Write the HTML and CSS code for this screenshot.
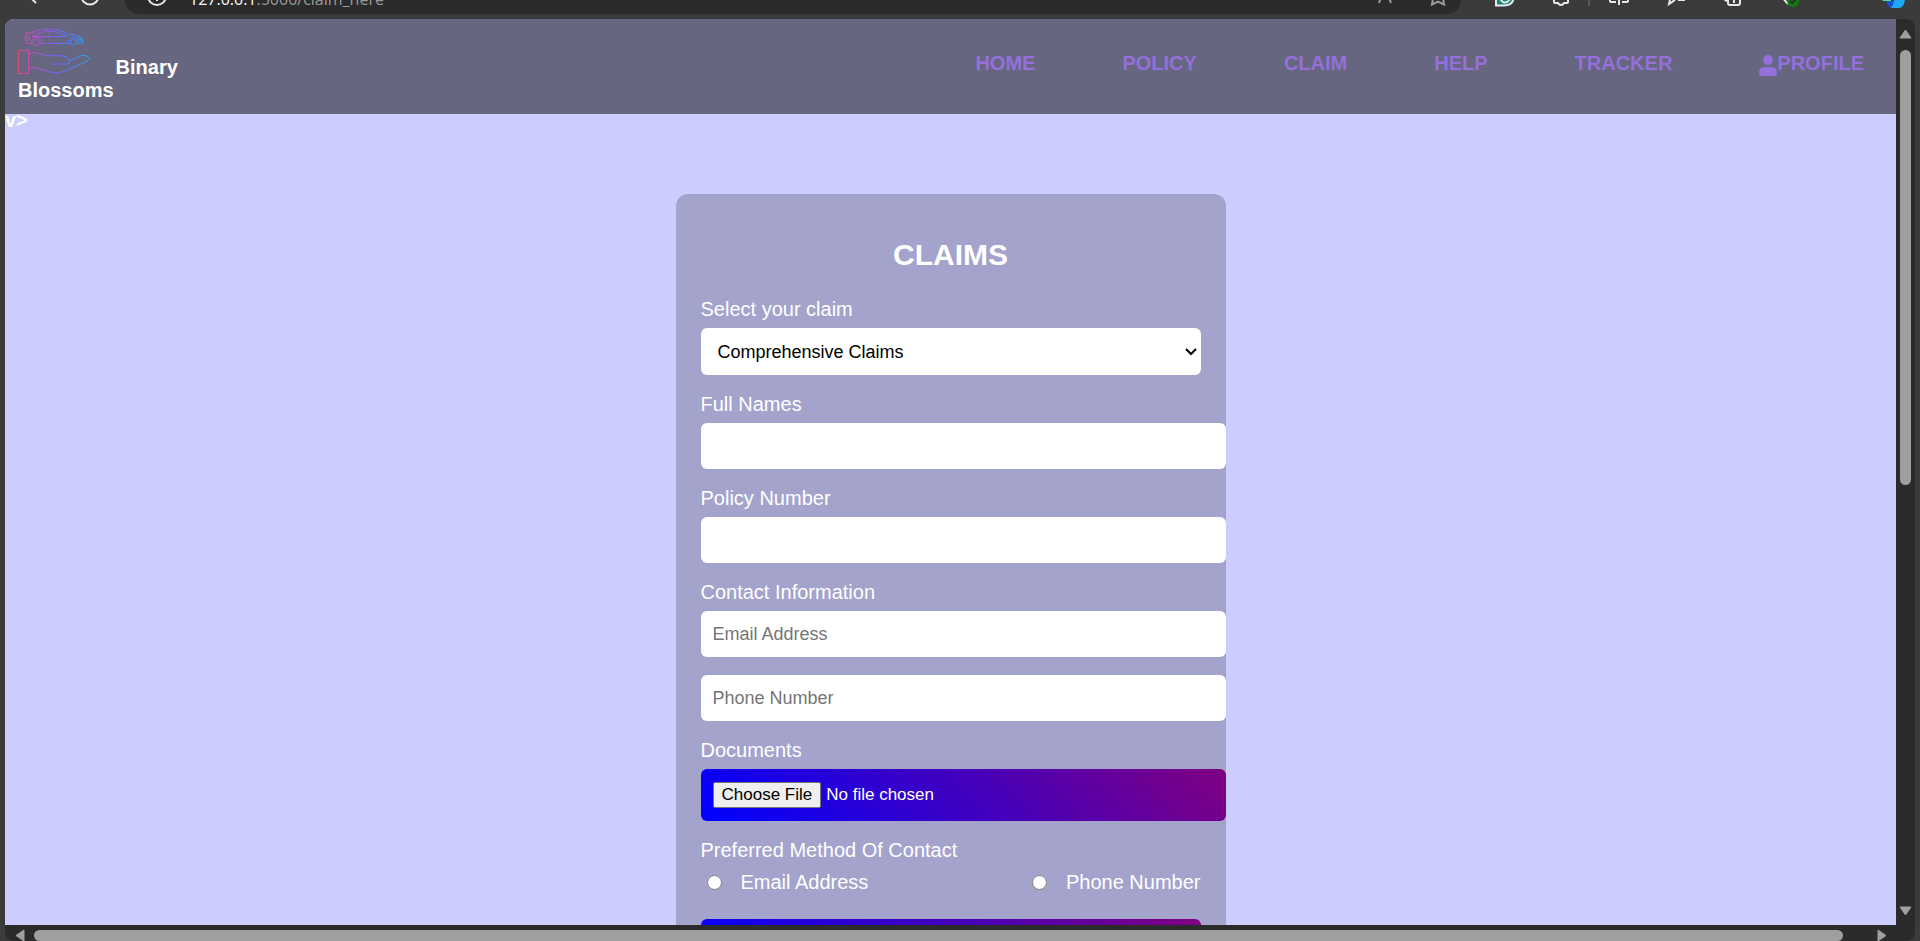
FILE: index.html
```html
<!DOCTYPE html>
<html lang="en">
<head>
<meta charset="utf-8">
<title>Binary Blossoms - Claims</title>
<link rel="stylesheet" href="styles.css">
</head>
<body>
<div class="toolbar">
  <div class="tools-left">
    <svg class="tool" viewBox="0 0 20 12"><path d="M4 -5 L12 3"/></svg>
    <svg class="tool" viewBox="0 0 20 12"><circle cx="10" cy="-4" r="8.5"/></svg>
  </div>
  <div class="address">
    <svg class="tool info" viewBox="0 0 20 12"><circle cx="10" cy="-4" r="9"/><path d="M10 -4V1"/></svg>
    <span class="url"><b>127.0.0.1</b>:5000/claim_here</span>
    <svg class="tool dim" viewBox="0 0 20 12"><path d="M4 3 L8 -8 M16 3 L12 -8 M6 -2H14"/></svg>
    <svg class="tool dim star" viewBox="0 0 20 12"><path d="M5 -2 L4 4.500 L10 1.500 L16 4.500 L15 -2"/></svg>
  </div>
  <div class="tools-right">
    <div class="cell"><svg class="tool" viewBox="0 0 20 12"><path class="teal" d="M1 -10H19V-3Q18 5.500 9 5.500H1Z"/><path d="M5 -1Q10 6 15 -1"/></svg></div>
    <div class="cell ruled"><svg class="tool" viewBox="0 0 20 12"><path d="M3 -4V2Q3 3 4 3H7Q8 5 10 5T13 3H16Q17 3 17 2V-4"/></svg></div>
    <div class="cell"><svg class="tool" viewBox="0 0 20 12"><path d="M1 -6V1Q1 2 3 2H7M19 -6V1Q19 2 17 2H13M10 -8V5"/></svg></div>
    <div class="cell"><svg class="tool" viewBox="0 0 20 12"><path d="M5 -5 L3 4 L9 0 M12 0H19"/></svg></div>
    <div class="cell"><svg class="tool" viewBox="0 0 20 12"><path d="M5 -6V3Q5 5 7 5H15Q17 5 17 3V-6M11 -4V3M1 -3Q1 1 5 1"/></svg></div>
    <div class="cell"><svg class="tool" viewBox="0 0 20 12"><path d="M1 -4 L8 4"/><circle class="green" cx="13" cy="1" r="6"/><path class="tick" d="M10 1 L12 3 L16 -1"/></svg></div>
    <svg class="copilot" viewBox="0 0 26 12"><path fill="#4fe08c" d="M0 -4H11V1H3Z"/><path fill="#1b4fd8" d="M6 1H15L12 8Q8 8 6 1Z"/><path fill="#1ea7f2" d="M14 -4H26L24 4Q22 8 19 8H11Q13 6 14 1Z"/></svg>
  </div>
</div>

<div class="window">
  <div class="viewport">
    <header class="header">
      <a class="brand" href="#">
        <svg class="logo" viewBox="54 76 276 144" aria-hidden="true">
          <defs><linearGradient id="neon" gradientUnits="userSpaceOnUse" x1="54" y1="0" x2="270" y2="0">
            <stop offset="0" stop-color="#f0457a"/><stop offset=".22" stop-color="#c34bcc"/><stop offset=".5" stop-color="#805cff"/><stop offset=".75" stop-color="#4f80ff"/><stop offset="1" stop-color="#22aaea"/>
          </linearGradient></defs>
          <g fill="none" stroke="url(#neon)" stroke-width="3" stroke-linejoin="round">
            <path d="M98 128H80Q75 122 76 113L80 97H92Q115 85 148 85Q180 86 205 101Q228 102 240 107Q249 112 248 126L244 128H231M209 128H120"/>
            <path d="M96 108Q118 92 150 92Q180 93 202 108ZM149 92V108M78 110H88V118H77M232 110L246 116M234 118H247"/>
            <circle cx="109" cy="125" r="9"/><path d="M94 125A15 15 0 0 1 124 125"/>
            <circle cx="220" cy="125" r="9"/><path d="M205 125A15 15 0 0 1 235 125"/>
            <path d="M56 149H86V219H56Z"/>
            <path d="M86 158Q102 153 112 157Q128 163 140 165H178Q205 166 208 180L206 190H154M208 181Q230 172 240 166Q260 160 269 174Q266 180 250 187L200 209Q178 220 158 216L105 202Q96 199 86 202"/>
          </g>
        </svg> Binary Blossoms
      </a>
      <nav class="nav">
        <a href="#">HOME</a>
        <a href="#">POLICY</a>
        <a href="#">CLAIM</a>
        <a href="#">HELP</a>
        <a href="#">TRACKER</a>
        <a href="#"><svg class="user" viewBox="0 0 18 21" aria-hidden="true"><circle cx="9" cy="5" r="5"/><path d="M5 12H13Q18 12 18 18V19Q18 21 16 21H2Q0 21 0 19V18Q0 12 5 12Z"/></svg>PROFILE</a>
      </nav>
    </header>
    <div class="stray">v&gt;</div>

    <form class="card">
      <h1>CLAIMS</h1>
      <div class="field">
        <label for="claim">Select your claim</label>
        <div class="select-wrap">
          <select id="claim"><option>Comprehensive Claims</option></select>
          <svg class="chevron" viewBox="0 0 12 8" aria-hidden="true"><path d="M1 1L6 6L11 1"/></svg>
        </div>
      </div>
      <div class="field">
        <label for="names">Full Names</label>
        <input class="box" id="names" type="text">
      </div>
      <div class="field">
        <label for="policy">Policy Number</label>
        <input class="box" id="policy" type="text">
      </div>
      <div class="field">
        <label for="email">Contact Information</label>
        <input class="box" id="email" type="email" placeholder="Email Address">
      </div>
      <div class="field">
        <input class="box" type="tel" placeholder="Phone Number" aria-label="Phone Number">
      </div>
      <div class="field">
        <label for="docs">Documents</label>
        <input class="file" id="docs" type="file">
      </div>
      <div class="field" role="radiogroup" aria-labelledby="method">
        <span class="caption" id="method">Preferred Method Of Contact</span>
        <div class="choices">
          <label><input type="radio" name="method">Email Address</label>
          <label><input type="radio" name="method">Phone Number</label>
        </div>
      </div>
      <button class="submit" type="submit" aria-label="Submit"></button>
    </form>
  </div>

  <div class="scroll-y">
    <svg class="arrow-y" viewBox="0 0 13 10"><path d="M6.500 1L12 9H1Z"/></svg>
    <div class="track-y"><div class="thumb-y"></div></div>
    <svg class="arrow-y" viewBox="0 0 13 10"><path d="M6.500 9L12 1H1Z"/></svg>
  </div>
  <div class="scroll-x">
    <svg class="arrow-x" viewBox="0 0 10 13"><path d="M1 6.500L9 1V12Z"/></svg>
    <div class="thumb-x"></div>
    <svg class="arrow-x" viewBox="0 0 10 13"><path d="M9 6.500L1 1V12Z"/></svg>
  </div>
</div>
</body>
</html>
```
FILE: styles.css
```css
* { box-sizing: border-box; }

body {
  margin: 0;
  height: 100vh;
  display: flex;
  flex-direction: column;
  overflow: hidden;
  background: #3b3b3b;
  font-family: "Liberation Sans", Arial, sans-serif;
  font-size: 20px;
  line-height: 22px;
  color: #fff;
}

/* Browser toolbar */
.toolbar {
  display: flex;
  flex: none;
  height: 19px;
  overflow: hidden;
}
.tool {
  width: 20px;
  height: 12px;
  flex: none;
  fill: none;
  stroke: #e8e8e8;
  stroke-width: 2;
}
.dim { stroke: #9a9a9a; }
.tools-left {
  display: flex;
  gap: 36px;
  width: 125px;
  padding-left: 24px;
}
.address {
  display: flex;
  flex: 1;
  align-items: flex-start;
  height: 14px;
  padding: 0 13px 0 22px;
  border-radius: 0 0 16px 16px;
  background: #2b2b2b;
}
.url {
  flex: 1;
  align-self: flex-end;
  margin-left: 22px;
  padding-bottom: 5px;
  font-family: "Open Sans", sans-serif;
  font-size: 16px;
  line-height: 20px;
  color: #9a9a9a;
}
.url b { font-weight: 400; color: #fff; }
.star { margin-left: 33px; }
.tools-right {
  display: flex;
  width: 459px;
  padding: 0 14px 0 15px;
}
.cell {
  display: flex;
  width: 57px;
  height: 6px;
  justify-content: center;
}
.cell.ruled { border-right: 2px solid #5a5a5a; }
.copilot { width: 26px; height: 12px; margin-left: auto; }
.teal { fill: #0e8a73; }
.green { fill: #107c10; stroke: none; }
.tick { stroke: #2b2b2b; }

/* Window frame: page viewport with its scrollbars */
.window {
  flex: 1;
  min-height: 0;
  display: grid;
  grid-template-columns: minmax(0, 1fr) 19px;
  grid-template-rows: minmax(0, 1fr) 16px;
  margin: 0 5px;
  border-radius: 9px;
  overflow: hidden;
  background: #2b2b2b;
}
.viewport {
  overflow: hidden;
  background: #ccccff;
}

.header {
  display: flex;
  justify-content: space-between;
  align-items: flex-start;
  padding: 7px 32px 12px 13px;
  background: #666680;
}
.brand {
  width: 170px;
  color: #fff;
  font-weight: 700;
  line-height: 23px;
  text-decoration: none;
}
.logo { width: 92px; height: 48px; vertical-align: baseline; }
.nav {
  display: flex;
  gap: 87px;
  padding-top: 26px;
}
.nav a {
  color: #9370db;
  font-weight: 700;
  text-decoration: none;
}
.user {
  width: 18px;
  height: 21px;
  margin: -2px 0;
  vertical-align: -4px;
  fill: #9370db;
}
.stray {
  height: 10px;
  line-height: 12px;
  font-weight: 700;
}

/* Claim form */
.card {
  width: 550px;
  margin: 70px auto;
  padding: 44px 25px;
  border-radius: 12px;
  background: #a3a3cc;
}
.card h1 {
  margin: 0 0 26px;
  font-size: 30px;
  line-height: 34px;
  text-align: center;
}
.field {
  display: flex;
  flex-direction: column;
  gap: 8px;
  margin-bottom: 18px;
}
.select-wrap { position: relative; }
select {
  display: block;
  width: 100%;
  height: 47px;
  padding: 0 30px 0 17px;
  border: 0;
  border-radius: 6px;
  appearance: none;
  background: #fff;
  color: #000;
  font: 18px "Liberation Sans", Arial, sans-serif;
}
.chevron {
  position: absolute;
  right: 4px;
  top: 20px;
  width: 12px;
  height: 8px;
  fill: none;
  stroke: #000;
  stroke-width: 2;
  pointer-events: none;
}
.box, .file {
  width: calc(100% + 25px);
  border: 0;
  border-radius: 6px;
}
.box {
  height: 46px;
  padding: 0 12px;
  background: #fff;
  font: 18px "Liberation Sans", Arial, sans-serif;
}
.box::placeholder { color: #757575; }
.file {
  padding: 13px 12px;
  background: linear-gradient(45deg, blue, purple);
  color: #fff;
  font: 17px "Liberation Sans", Arial, sans-serif;
}
.file::file-selector-button {
  height: 26px;
  margin: 0 5px 0 0;
  padding: 0 8px;
  border: 1px solid #767676;
  border-radius: 2px;
  background: #efefef;
  color: #000;
  font: inherit;
}
.choices {
  display: flex;
  justify-content: space-between;
  padding: 2px 0 8px;
}
.choices label { display: flex; align-items: center; }
.choices input {
  width: 15px;
  height: 15px;
  margin: 0 19px 0 6px;
}
.submit {
  width: 100%;
  height: 50px;
  border: 0;
  border-radius: 6px;
  background: linear-gradient(45deg, blue, purple);
  color: #fff;
  font: inherit;
}

/* Scrollbars */
.scroll-y {
  display: flex;
  flex-direction: column;
  align-items: center;
  gap: 11px;
  padding: 10px 0 9px;
}
.track-y { flex: 1; width: 11px; }
.thumb-y { height: 51.5%; border-radius: 6px; background: #9f9f9f; }
.arrow-y { width: 13px; height: 10px; }
.scroll-x {
  display: flex;
  align-items: center;
  gap: 9px;
  padding: 4px 9px 0 10px;
}
.thumb-x { flex: 1; height: 11px; margin-right: 25px; border-radius: 6px; background: #9f9f9f; }
.arrow-x { width: 10px; height: 13px; flex: none; }
.arrow-y, .arrow-x { fill: #9f9f9f; stroke: #9f9f9f; stroke-linejoin: round; }
```
